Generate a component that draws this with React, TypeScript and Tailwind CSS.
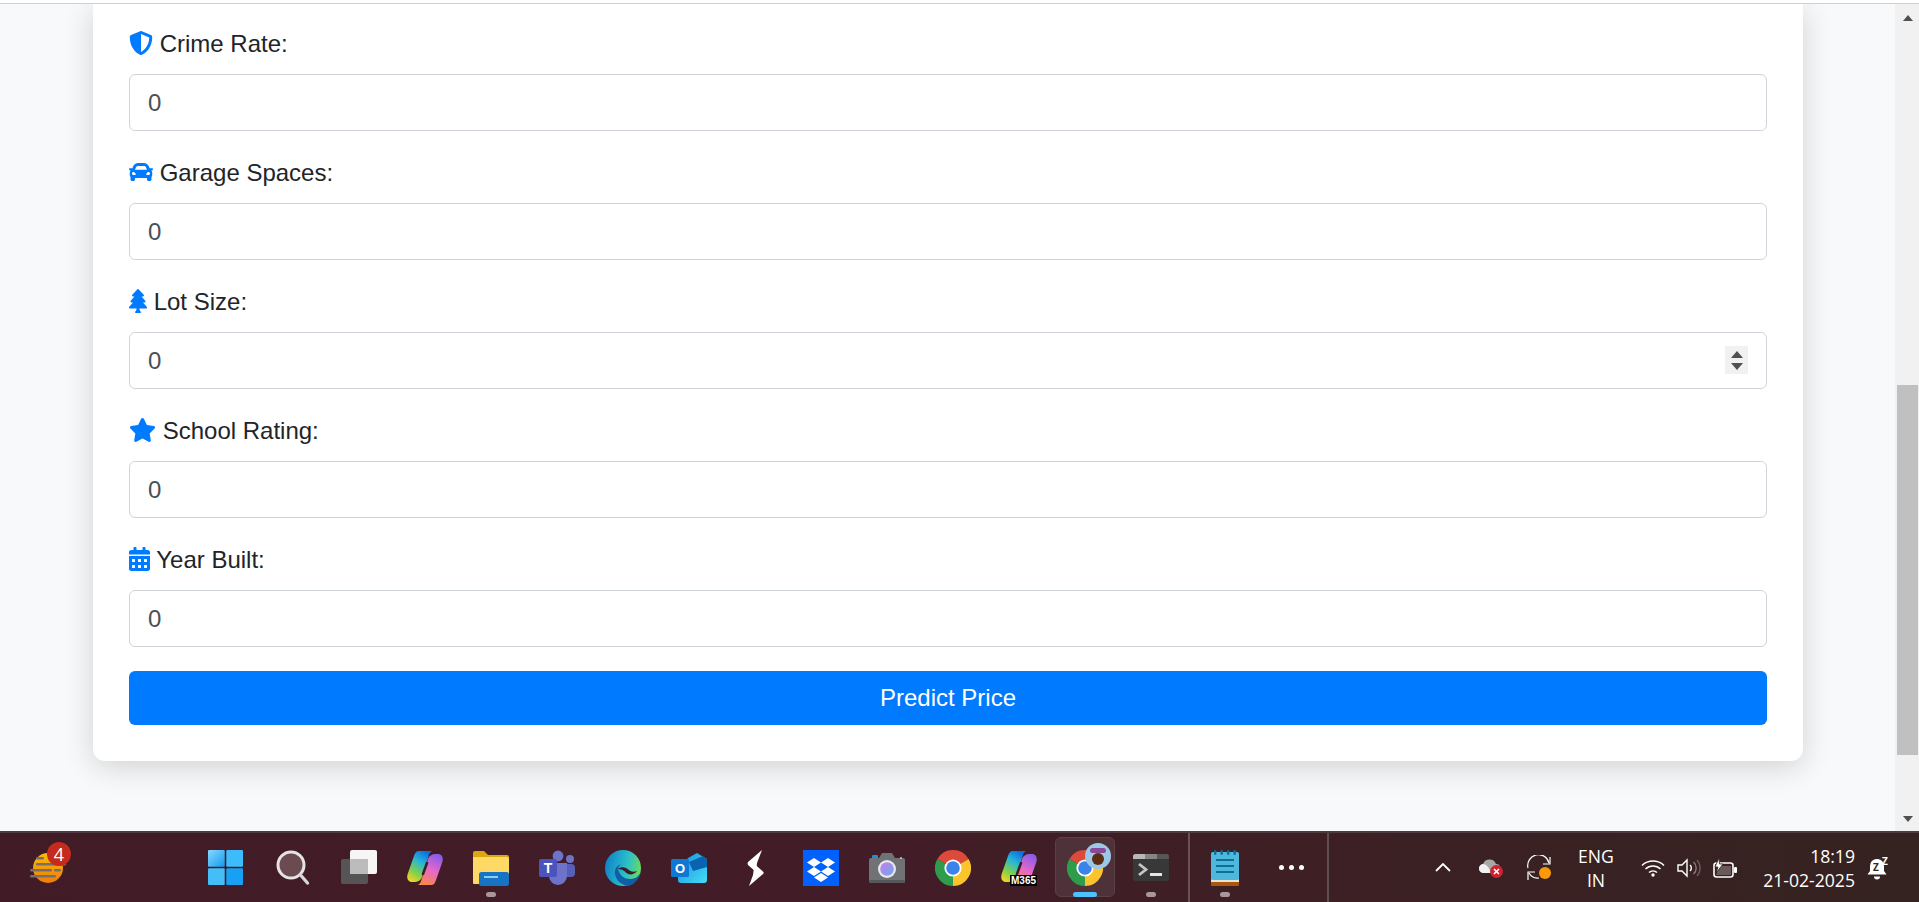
import React from "react";
import { FaShieldAlt, FaCar, FaTree, FaStar, FaCalendarAlt } from "react-icons/fa";

const Copilot = ({ id }: { id: string }) => (
  <svg viewBox="0 0 36 36" className="w-[36px] h-[36px]">
    <defs>
      <linearGradient id={id + "a"} x1="0.7" y1="0" x2="0.2" y2="1">
        <stop offset="0" stopColor="#0c6fe0" />
        <stop offset="0.35" stopColor="#27b6d8" />
        <stop offset="0.7" stopColor="#7fd04a" />
        <stop offset="1" stopColor="#f3d327" />
      </linearGradient>
      <linearGradient id={id + "b"} x1="0.7" y1="0" x2="0.3" y2="1">
        <stop offset="0" stopColor="#8a5ce8" />
        <stop offset="0.5" stopColor="#e668c8" />
        <stop offset="1" stopColor="#f8884a" />
      </linearGradient>
    </defs>
    <path d="M12 1H25C22 3 22 5 21 8L15 27C14 30 11 32 7 32H5C1 32-1 28 1 23L7 6C8 3 9 1 12 1Z" fill={`url(#${id}a)`} />
    <path d="M24 35H11C14 33 14 31 15 28L21 9C22 6 25 4 29 4H31C35 4 37 8 35 13L29 30C28 33 27 35 24 35Z" fill={`url(#${id}b)`} />
    <path d="M20 13L16 24" stroke="#3f1d26" strokeWidth="2.5" strokeLinecap="round" />
  </svg>
);

const Chrome = () => (
  <svg viewBox="0 0 36 36" className="w-[36px] h-[36px]">
    <path d="M18 18L2.41 9A18 18 0 0 1 33.59 9Z" fill="#dd4a3c" />
    <path d="M18 18L33.59 9A18 18 0 0 1 18 36Z" fill="#fbc42c" />
    <path d="M18 18L18 36A18 18 0 0 1 2.41 9Z" fill="#2f9c4c" />
    <circle cx="18" cy="18" r="8.6" fill="#fff" />
    <circle cx="18" cy="18" r="6.8" fill="#3a83ea" />
  </svg>
);

const Windows = () => (
  <svg viewBox="0 0 36 36" className="w-[35px] h-[35px] mr-[3px]">
    <defs>
      <linearGradient id="wg" x1="0" y1="0" x2="1" y2="1">
        <stop offset="0" stopColor="#86d8ff" />
        <stop offset="1" stopColor="#149bf0" />
      </linearGradient>
    </defs>
    <rect x="0" y="0" width="17.2" height="17.2" rx="1" fill="url(#wg)" />
    <rect x="18.8" y="0" width="17.2" height="17.2" rx="1" fill="#3cbcfa" />
    <rect x="0" y="18.8" width="17.2" height="17.2" rx="1" fill="#45bdf8" />
    <rect x="18.8" y="18.8" width="17.2" height="17.2" rx="1" fill="#18a0f4" />
  </svg>
);

const Search = () => (
  <svg viewBox="0 0 36 36" className="w-[36px] h-[36px]">
    <circle cx="16" cy="15" r="13" fill="#6b4a50" stroke="#e6e4e6" strokeWidth="3" />
    <line x1="25.5" y1="25" x2="32.5" y2="33" stroke="#d8d6d8" strokeWidth="3.4" strokeLinecap="round" />
  </svg>
);

const TaskView = () => (
  <svg viewBox="0 0 36 36" className="w-[36px] h-[36px]">
    <rect x="0" y="9" width="27" height="25" rx="2" fill="#565456" />
    <rect x="9" y="0" width="27" height="24" rx="2" fill="#f6f6f6" />
    <rect x="9" y="9" width="18" height="15" fill="#bdbcbd" />
  </svg>
);

const Explorer = () => (
  <svg viewBox="0 0 36 36" className="w-[36px] h-[36px]">
    <path d="M0 3a2 2 0 0 1 2-2h9l4 4h19a2 2 0 0 1 2 2v6H0z" fill="#dfa50f" />
    <path d="M0 7h34a2 2 0 0 1 2 2v25H1a1 1 0 0 1-1-1z" fill="#ffd966" />
    <rect x="6" y="22" width="30" height="14" rx="2.5" fill="#1773c4" />
    <rect x="11" y="26" width="14" height="2" fill="#8ccaf0" />
  </svg>
);

const Teams = () => (
  <svg viewBox="0 0 36 36" className="w-[36px] h-[36px]">
    <circle cx="31" cy="9" r="4" fill="#6d73c9" />
    <rect x="25" y="14" width="11" height="13" rx="4" fill="#585fb8" />
    <circle cx="19" cy="6" r="5.4" fill="#6d73c9" />
    <path d="M10 13h18v13a9 9 0 0 1-18 0z" fill="#6d73c9" />
    <rect x="0" y="9" width="18" height="18" rx="2" fill="#4b53bc" />
    <text x="9" y="23" textAnchor="middle" fontSize="14" fontWeight="700" fill="#fff" fontFamily="Liberation Sans, sans-serif">T</text>
  </svg>
);

const Edge = () => (
  <svg viewBox="0 0 36 36" className="w-[36px] h-[36px]">
    <defs>
      <linearGradient id="eg" x1="0" y1="0.4" x2="1" y2="0.6">
        <stop offset="0" stopColor="#0f83c9" />
        <stop offset="0.6" stopColor="#2cc0c8" />
        <stop offset="1" stopColor="#6cdc5c" />
      </linearGradient>
    </defs>
    <circle cx="18" cy="18" r="18" fill="url(#eg)" />
    <path d="M36 22c-3 5-6 7-11 7-6 0-9-3-11-7-2-4 0-7 3-8-5 1-8 5-7 10 1 6 6 11 13 12 6-1 11-7 13-14z" fill="#0f5ea8" />
    <path d="M13 19c3-3 8-2 11 1 2 2 5 2 8 1-2 3-6 4-9 3-3-2-5-5-10-5z" fill="#3f1d26" />
  </svg>
);

const Outlook = () => (
  <svg viewBox="0 0 36 30" className="w-[36px] h-[30px]">
    <defs>
      <linearGradient id="og" x1="0" y1="0" x2="1" y2="1">
        <stop offset="0" stopColor="#1590d8" />
        <stop offset="1" stopColor="#45dcf8" />
      </linearGradient>
    </defs>
    <path d="M17 5l9-5 8 5a2 2 0 0 1 2 2v20a3 3 0 0 1-3 3H10a3 3 0 0 1-3-3V18z" fill="url(#og)" />
    <path d="M18 9l14-6 4 3v8l-14 4z" fill="#0a63b0" />
    <rect x="0" y="6" width="18" height="18" rx="1.5" fill="#0f78d4" />
    <text x="9" y="20" textAnchor="middle" fontSize="13" fontWeight="700" fill="#fff" fontFamily="Liberation Sans, sans-serif">O</text>
  </svg>
);

const SLogo = () => (
  <svg viewBox="0 0 17 36" className="w-[17px] h-[36px]">
    <path d="M15 0L1 12Q0 13.500 1 15L9 22L10 13Z" fill="#fff" />
    <path d="M16.500 22Q17 23 16 24L2 36L6 25L7.500 14Z" fill="#fff" />
  </svg>
);

const Dropbox = () => (
  <svg viewBox="0 0 36 36" className="w-[36px] h-[36px]">
    <rect width="36" height="36" fill="#0061fe" />
    <g fill="#fff">
      <polygon points="11,8 18,12.5 11,17 4,12.5" />
      <polygon points="25,8 32,12.5 25,17 18,12.5" />
      <polygon points="11,17 18,21.5 11,26 4,21.5" />
      <polygon points="25,17 32,21.5 25,26 18,21.5" />
      <polygon points="18,23 25,27.5 18,32 11,27.5" />
    </g>
  </svg>
);

const Camera = () => (
  <svg viewBox="0 0 36 30" className="w-[36px] h-[30px]">
    <defs>
      <linearGradient id="cg" x1="0" y1="0" x2="1" y2="1">
        <stop offset="0" stopColor="#c47ee8" />
        <stop offset="1" stopColor="#6fa8f0" />
      </linearGradient>
    </defs>
    <rect x="3" y="2" width="6" height="4" rx="1" fill="#1e90d8" />
    <path d="M0 7a2 2 0 0 1 2-2h8l3-5h10l3 5h8a2 2 0 0 1 2 2v21a2 2 0 0 1-2 2H2a2 2 0 0 1-2-2z" fill="#707276" />
    <rect y="27" width="36" height="3" rx="1.5" fill="#55575a" />
    <circle cx="18" cy="16" r="9" fill="#e8e8ea" />
    <circle cx="18" cy="16" r="6.8" fill="url(#cg)" />
    <path d="M31 5h2M32 4v2" stroke="#c8c8c8" strokeWidth="1" />
  </svg>
);

const Terminal = () => (
  <svg viewBox="0 0 36 27" className="w-[36px] h-[27px]">
    <rect width="36" height="27" rx="2.5" fill="#383838" />
    <path d="M0 2.5A2.5 2.5 0 0 1 2.5 0H12v5H0z" fill="#b8b8b8" />
    <rect x="12" width="12" height="5" fill="#868686" />
    <path d="M24 0h9.5A2.5 2.5 0 0 1 36 2.5V5H24z" fill="#565656" />
    <path d="M6 10l7 5.5-7 5.5" fill="none" stroke="#c4c4c4" strokeWidth="2.8" />
    <rect x="17" y="19" width="12" height="3" fill="#e6e6e6" />
  </svg>
);

const Notepad = () => (
  <svg viewBox="0 0 28 36" className="w-[28px] h-[36px]">
    <rect y="30" width="28" height="6" rx="1" fill="#a9570f" />
    <rect y="28" width="28" height="4" fill="#e8e4d8" />
    <rect y="2" width="28" height="28" rx="1.5" fill="#4fb7dc" />
    <g fill="#0b7097">
      <rect x="3" width="2.4" height="5" rx="1.2" />
      <rect x="9.5" width="2.4" height="5" rx="1.2" />
      <rect x="16" width="2.4" height="5" rx="1.2" />
      <rect x="22.5" width="2.4" height="5" rx="1.2" />
      <rect x="5" y="9" width="18" height="2" />
      <rect x="5" y="15" width="18" height="2" />
      <rect x="5" y="21" width="18" height="2" />
    </g>
  </svg>
);

const M365 = () => (
  <div className="relative w-[36px] h-[36px]">
    <Copilot id="m3" />
    <span className="absolute right-[0px] bottom-[0px] bg-black text-white text-[10px] leading-[11px] px-[1px] font-['Liberation_Sans',sans-serif] font-bold">M365</span>
  </div>
);

const Widget = () => (
  <svg viewBox="0 0 36 32" className="w-[36px] h-[32px]">
    <defs>
      <linearGradient id="sun" x1="0" y1="0" x2="0" y2="1">
        <stop offset="0" stopColor="#fbbd06" />
        <stop offset="1" stopColor="#ee7b0c" />
      </linearGradient>
    </defs>
    <circle cx="18" cy="16" r="15" fill="url(#sun)" />
    <g fill="#75706a">
      <rect x="6" y="5" width="8" height="2.6" rx="1.3" />
      <rect x="6" y="11" width="30" height="2.6" rx="1.3" />
      <rect x="0" y="17" width="22" height="2.6" rx="1.3" />
      <rect x="24" y="17" width="7" height="2.6" rx="1.3" />
      <rect x="0" y="23" width="26" height="2.6" rx="1.3" />
    </g>
  </svg>
);

const Chevron = () => (
  <svg viewBox="0 0 16 9" className="w-[16px] h-[9px]">
    <path d="M1 8l7-7 7 7" fill="none" stroke="#fff" strokeWidth="1.8" />
  </svg>
);

const Cloud = () => (
  <svg viewBox="0 0 24 20" className="w-[24px] h-[20px]">
    <path d="M5 15a4.5 4.5 0 0 1-1-9 7 7 0 0 1 13 0 4 4 0 0 1 3 7v2z" fill="#a8a8a8" />
    <path d="M5 15a4.5 4.5 0 0 1-1-9c3 0 6 3 8 9z" fill="#f0f0f0" />
    <circle cx="17.5" cy="13.5" r="6.5" fill="#d3202f" />
    <path d="M15 11l5 5M20 11l-5 5" stroke="#fff" strokeWidth="1.6" />
  </svg>
);

const Sync = () => (
  <svg viewBox="0 0 24 26" className="w-[24px] h-[26px]">
    <path d="M1 13A10 10 0 0 1 22 8" fill="none" stroke="#fff" strokeWidth="1.2" />
    <path d="M23 2v7h-7" fill="none" stroke="#fff" strokeWidth="1.2" />
    <path d="M2 18a10 10 0 0 0 10 5" fill="none" stroke="#fff" strokeWidth="1.2" />
    <path d="M1 25v-8h7" fill="none" stroke="#fff" strokeWidth="1.2" />
    <circle cx="18" cy="18" r="6" fill="#fb9a07" />
  </svg>
);

const Wifi = () => (
  <svg viewBox="0 0 24 18" className="w-[24px] h-[18px]">
    <g fill="none" stroke="#fff" strokeWidth="1.5">
      <path d="M1 6.5a16 16 0 0 1 22 0" />
      <path d="M4.5 10a11 11 0 0 1 15 0" />
      <path d="M8 13.5a6 6 0 0 1 8 0" />
    </g>
    <circle cx="12" cy="16" r="1.7" fill="#fff" />
  </svg>
);

const Volume = () => (
  <svg viewBox="0 0 24 20" className="w-[24px] h-[20px]">
    <path d="M1 7h4l5-5v16l-5-5H1z" fill="none" stroke="#fff" strokeWidth="1.4" />
    <path d="M13 7a4 4 0 0 1 0 6" fill="none" stroke="#fff" strokeWidth="1.4" />
    <path d="M16.500 4a8 8 0 0 1 0 12" fill="none" stroke="#8a7c7a" strokeWidth="1.4" />
    <path d="M20 2a12 12 0 0 1 0 16" fill="none" stroke="#6a5c5a" strokeWidth="1.4" />
  </svg>
);

const Battery = () => (
  <svg viewBox="0 0 24 20" className="w-[24px] h-[20px]">
    <rect x="1" y="5" width="19" height="14" rx="2.5" fill="none" stroke="#fff" strokeWidth="1.6" />
    <rect x="21" y="9" width="3" height="6" rx="1" fill="#fff" />
    <path d="M3 17l4-9h11v9z" fill="#fff" opacity="0.25" />
    <path d="M6 0L2 9h3l-2 6 7-9H6.500z" fill="#fff" stroke="#35231f" strokeWidth="0.8" />
  </svg>
);

const Bell = () => (
  <svg viewBox="0 0 22 24" className="w-[22px] h-[24px] overflow-visible">
    <path d="M9 3a7 7 0 0 0-6 7v5l-2.500 3.500h19L17 15v-5a7 7 0 0 0-6-7z" fill="#fff" />
    <path d="M7 20.500h6a3 3 0 0 1-6 0z" fill="#fff" />
    <text x="6" y="15" fontSize="10" fontWeight="700" fill="#35231f" fontFamily="Open Sans, sans-serif">Z</text>
    <text x="15" y="9" fontSize="10" fontWeight="700" fill="#fff" fontFamily="Open Sans, sans-serif">Z</text>
  </svg>
);

const fields = [
  { label: "Crime Rate:", icon: <FaShieldAlt className="inline-block w-[24px] h-[24px] align-[-3px]" /> },
  { label: "Garage Spaces:", icon: <FaCar className="inline-block w-[24px] h-[24px] align-[-3px]" /> },
  { label: "Lot Size:", icon: <FaTree className="inline-block w-[18px] h-[24px] align-[-3px]" />, spin: true },
  { label: "School Rating:", icon: <FaStar className="inline-block w-[27px] h-[24px] align-[-3px]" /> },
  { label: "Year Built:", icon: <FaCalendarAlt className="inline-block w-[21px] h-[24px] align-[-3px]" /> },
];

const Item = ({ children, dot, active }: { children: React.ReactNode; dot?: boolean; active?: boolean }) => (
  <div className="relative flex h-full w-[66px] items-center justify-center">
    {active && <div className="absolute left-[3px] top-[4px] h-[60px] w-[60px] rounded-[6px] border border-[#5a4148] bg-[#4e3139]" />}
    <div className="relative">{children}</div>
    {dot && (
      <div
        className={
          active
            ? "absolute bottom-[5px] left-[21px] h-[5px] w-[24px] rounded-full bg-[#4cc2ff]"
            : "absolute bottom-[5px] left-[28px] h-[5px] w-[10px] rounded-full bg-[#a8989c]"
        }
      />
    )}
  </div>
);

export default function App() {
  return (
    <div className="flex h-[902px] w-full flex-col overflow-hidden bg-white font-['Liberation_Sans',Arial,sans-serif] text-[24px] text-[#212529]">
      <div className="h-[3px] shrink-0 bg-white" />
      <div className="h-[1px] shrink-0 bg-[#cfcfcf]" />
      <div className="flex h-[827px] shrink-0">
        <main className="min-w-0 flex-1 overflow-hidden bg-[#f8f9fa]">
          <div className="ml-[93px] w-[1710px] rounded-b-[12px] bg-white px-[36px] pb-[36px] pt-[22px] shadow-[0_6px_30px_rgba(0,0,0,0.16)]">
            {fields.map((f) => (
              <div key={f.label} className="mb-[24px]">
                <label className="mb-[12px] block h-[36px] leading-[36px]">
                  <span className="text-[#007bff]">{f.icon}</span> {f.label}
                </label>
                <div className="relative">
                  <input
                    type="text"
                    readOnly
                    value="0"
                    className="block h-[57px] w-full rounded-[6px] border-[1.5px] border-[#ced4da] bg-white px-[18px] text-[24px] text-[#495057] outline-none"
                  />
                  {f.spin && (
                    <div className="absolute right-[19px] top-[14px] flex h-[28px] w-[23px] flex-col items-center justify-center gap-[5px] bg-[#f1f1f1]">
                      <div className="h-0 w-0 border-x-[6px] border-b-[7px] border-x-transparent border-b-[#505050]" />
                      <div className="h-0 w-0 border-x-[6px] border-t-[7px] border-x-transparent border-t-[#505050]" />
                    </div>
                  )}
                </div>
              </div>
            ))}
            <button className="block h-[54px] w-full rounded-[6px] bg-[#007bff] text-[24px] text-white">Predict Price</button>
          </div>
        </main>
        <div className="flex w-[24px] shrink-0 flex-col bg-[#f1f1f1] pl-[2px] pr-[1px]">
          <div className="flex h-[381px] shrink-0 justify-center pt-[11px]">
            <div className="h-0 w-0 border-x-[5.5px] border-b-[6px] border-x-transparent border-b-[#505050]" />
          </div>
          <div className="h-[370px] shrink-0 bg-[#c0c0c0]" />
          <div className="flex flex-1 justify-center pt-[61px]">
            <div className="h-0 w-0 border-x-[5.5px] border-t-[6px] border-x-transparent border-t-[#505050]" />
          </div>
        </div>
      </div>
      <footer className="flex h-[71px] shrink-0 items-center border-t-[2px] border-[#4f3b42] bg-linear-to-r from-[#411c26] via-[#421d27] to-[#342320] font-['Open_Sans',sans-serif] text-[17.6px] leading-[24px] text-white">
        <div className="flex h-full w-[194px] shrink-0 items-center pl-[30px]">
          <div className="relative">
            <Widget />
            <div className="absolute left-[17px] top-[-10px] flex h-[24px] w-[24px] items-center justify-center rounded-full bg-[#c42b1c] text-[18px]">4</div>
          </div>
        </div>
        <Item><Windows /></Item>
        <Item><Search /></Item>
        <Item><TaskView /></Item>
        <Item><Copilot id="cp" /></Item>
        <Item dot><Explorer /></Item>
        <Item><Teams /></Item>
        <Item><Edge /></Item>
        <Item><Outlook /></Item>
        <Item><SLogo /></Item>
        <Item><Dropbox /></Item>
        <Item><Camera /></Item>
        <Item><Chrome /></Item>
        <Item><M365 /></Item>
        <Item dot active>
          <div className="relative">
            <Chrome />
            <div className="absolute left-[18px] top-[-7px] h-[26px] w-[26px] overflow-hidden rounded-full bg-[#9cc8e8]">
              <div className="absolute left-[7px] top-[10px] h-[12px] w-[12px] rounded-full bg-[#5a2e14]" />
              <div className="absolute left-[5px] top-[5px] h-[5px] w-[16px] rounded-full bg-[#8a4a9a]" />
            </div>
          </div>
        </Item>
        <Item dot><Terminal /></Item>
        <div className="ml-[4px] mr-[2px] h-full w-[2px] shrink-0 bg-[#6a5358]" />
        <Item dot><Notepad /></Item>
        <Item>
          <div className="flex gap-[5px]">
            <div className="h-[5px] w-[5px] rounded-full bg-white" />
            <div className="h-[5px] w-[5px] rounded-full bg-white" />
            <div className="h-[5px] w-[5px] rounded-full bg-white" />
          </div>
        </Item>
        <div className="ml-[3px] h-full w-[2px] shrink-0 bg-[#5f4f4f]" />
        <div className="ml-[90px] flex w-[48px] justify-center"><Chevron /></div>
        <div className="flex w-[48px] justify-center"><Cloud /></div>
        <div className="flex w-[48px] justify-center"><Sync /></div>
        <div className="flex w-[66px] flex-col items-center">
          <span>ENG</span>
          <span>IN</span>
        </div>
        <div className="ml-[6px] flex w-[36px] justify-center"><Wifi /></div>
        <div className="flex w-[36px] justify-center"><Volume /></div>
        <div className="flex w-[36px] justify-center"><Battery /></div>
        <div className="flex w-[112px] flex-col items-end">
          <span>18:19</span>
          <span>21-02-2025</span>
        </div>
        <div className="flex w-[46px] justify-center"><Bell /></div>
      </footer>
    </div>
  );
}
